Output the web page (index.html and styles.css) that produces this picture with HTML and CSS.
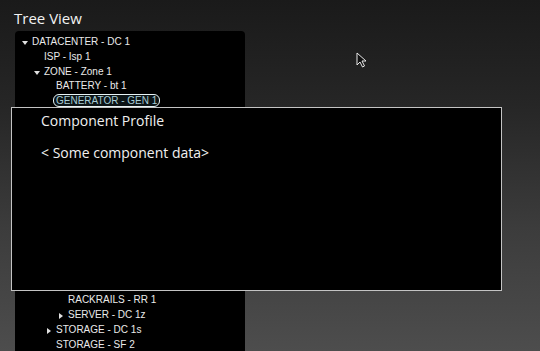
FILE: index.html
```html
<!DOCTYPE html>
<html lang="en">

<head>
    <meta charset="UTF-8">
    <meta name="viewport" content="width=device-width, initial-scale=1.0">
    <title>Tree View</title>
    <link rel="stylesheet" href="styles.css">
</head>

<body>
    <div class="page">
        <h1 class="title">Tree View</h1>
        <div class="tree-panel">
            <ul class="tree">
                <li class="node lvl-0 open">DATACENTER - DC 1</li>
                <li class="node lvl-1">ISP - Isp 1</li>
                <li class="node lvl-1 open">ZONE - Zone 1</li>
                <li class="node lvl-2">BATTERY - bt 1</li>
                <li class="node lvl-2"><span class="selected">GENERATOR - GEN 1</span></li>
                <li class="node lvl-2">HVAC - HV 1</li>
                <li class="node lvl-2">PDU - PD 1</li>
                <li class="node lvl-2 open">RACK - RK 1</li>
                <li class="node lvl-3">CHASSIS - CH 1</li>
                <li class="node lvl-3">RACKRAILS - RR 0</li>
                <li class="node lvl-3">SERVER - DC 1a</li>
                <li class="node lvl-3">SERVER - DC 1b</li>
                <li class="node lvl-3">SWITCH - SW 1</li>
                <li class="node lvl-3">PATCHPANEL - PP 1</li>
                <li class="node lvl-3">UPS - UP 1</li>
                <li class="node lvl-3">CABLE - CB 1</li>
                <li class="node lvl-3">FAN - FN 1</li>
                <li class="node lvl-3 gap">RACKRAILS - RR 1</li>
                <li class="node lvl-3 closed">SERVER - DC 1z</li>
                <li class="node lvl-2 closed">STORAGE - DC 1s</li>
                <li class="node lvl-2">STORAGE - SF 2</li>
            </ul>
        </div>

        <div class="modal">
            <div class="modal-title">Component Profile</div>
            <div class="modal-body">&lt; Some component data&gt;</div>
        </div>

        <svg class="cursor" width="11" height="16" viewBox="0 0 11 16">
            <path d="M1 1 L1 13 L4 10 L6.5 15 L8.5 14 L6 9 L10 9 Z" fill="#111" stroke="#e8e8e8" stroke-width="1"/>
        </svg>
    </div>
</body>

</html>
```

FILE: styles.css
```css
body,
html {
    margin: 0;
    padding: 0;
    height: 100%;
    overflow: hidden;
}

.page {
    position: relative;
    height: 351px;
    background: linear-gradient(to bottom, #1a1a1a 0%, #262626 30%, #3c3c3c 65%, #4d4d4d 100%);
    font-family: "Liberation Sans", Arial, sans-serif;
    color: #ffffff;
}

.title {
    margin: 0;
    padding: 8px 0 0 14px;
    height: 23px;
    font-family: "Open Sans", sans-serif;
    font-size: 15px;
    font-weight: normal;
    line-height: 20px;
    color: #f2f2f2;
}

.tree-panel {
    margin-left: 15px;
    width: 230px;
    height: 330px;
    background: #000;
    border-radius: 4px 4px 0 0;
    overflow: hidden;
}

.tree {
    list-style: none;
    margin: 0;
    padding: 4px 0 0 0;
}

.node {
    position: relative;
    font-size: 10px;
    line-height: 14.8px;
    color: #eaeaea;
    white-space: nowrap;
}

.gap {
    margin-top: 6.6px;
}

.lvl-0 { padding-left: 17px; }
.lvl-1 { padding-left: 29px; }
.lvl-2 { padding-left: 41px; }
.lvl-3 { padding-left: 53px; }

/* expander arrows */
.open::before,
.closed::before {
    content: "";
    position: absolute;
    top: 6px;
    width: 0;
    height: 0;
}

.open::before {
    margin-left: -10px;
    border-left: 3px solid transparent;
    border-right: 3px solid transparent;
    border-top: 4px solid #e0e0e0;
}

.closed::before {
    top: 5px;
    margin-left: -9px;
    border-top: 3px solid transparent;
    border-bottom: 3px solid transparent;
    border-left: 4px solid #e0e0e0;
}

.selected {
    margin-left: -3px;
    padding: 0 2px;
    border: 1px solid #e8f4f6;
    border-radius: 6px;
    background: #0c1416;
    color: #a6cbd4;
}

.modal {
    position: absolute;
    left: 11px;
    top: 107px;
    width: 491px;
    height: 184px;
    box-sizing: border-box;
    padding-left: 29px;
    background: #000;
    border: 1px solid #c4c4c4;
    font-family: "Open Sans", sans-serif;
    font-size: 14px;
    color: #f0f0f0;
}

.modal-title {
    margin-top: 3px;
    line-height: 20px;
}

.modal-body {
    margin-top: 12px;
    line-height: 20px;
}

.cursor {
    position: absolute;
    left: 356px;
    top: 52px;
}
```
